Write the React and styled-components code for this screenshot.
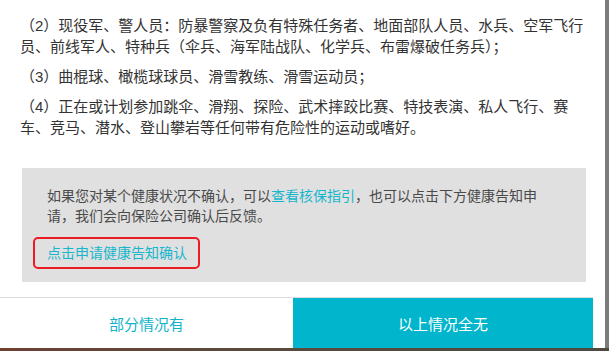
import styled, { createGlobalStyle } from "styled-components";

const GlobalStyle = createGlobalStyle`
html, body {
  margin: 0;
  padding: 0;
  height: 100%;
}
body {
  font-family: "Liberation Sans", "Noto Sans CJK SC", sans-serif;
  background: linear-gradient(90deg, #6e4032 0%, #5a4a3c 40%, #4e4a42 100%);
}
#root {
  height: 100%;
}
`;

const Screen = styled.div`
height: 100vh;
display: flex;
flex-direction: column;
`;

const TopRow = styled.div`
height: 348px;
display: flex;
`;

const Backdrop = styled.div`
flex: 1;
background-color: #7b7b7b;
`;

const Modal = styled.div`
width: 605px;
display: flex;
background-color: #fff;
`;

const Column = styled.div`
width: 593px;
display: flex;
flex-direction: column;
`;

const ScrollTrack = styled.div`
flex: 1;
background-color: #fff;
`;

const ScrollArea = styled.div`
flex: 1;
overflow: hidden;
padding-top: 15px;
`;

const Terms = styled.div`
padding: 0 8px 0 20px;
`;

const Paragraph = styled.p`
margin: 0 0 9px;
font-size: 15px;
line-height: 21px;
color: #333;
`;

const Notice = styled.div`
margin: 30px 7px 0 22px;
padding: 18px 40px 13px 25px;
background-color: #e0e0e0;
display: flex;
flex-direction: column;
align-items: flex-start;
`;

const NoticeText = styled.p`
margin: 0;
font-size: 14px;
line-height: 20px;
color: #4a4a4a;
`;

const Link = styled.span`
color: ${(props) => props.color || "#17b6cd"};
`;

const ApplyLink = styled.a`
margin: 11px 0 0 -14px;
padding: 0 11px 0 12px;
height: 28px;
line-height: 28px;
border: 2px solid #ec1c24;
border-radius: 5px;
font-size: 14px;
color: #17b6cd;
text-decoration: none;
`;

const Footer = styled.div`
height: 50px;
border-top: 1px solid #dcdcdc;
display: flex;
`;

const Btn = styled.button`
width: ${(props) => props.width}px;
border: 0;
margin: 0;
padding: 0;
font-family: "Liberation Sans", "Noto Sans CJK SC", sans-serif;
font-size: 15px;
background-color: ${(props) => (props.primary ? "#00b5cc" : "#fff")};
color: ${(props) => (props.primary ? "#fff" : "#10b3ca")};
`;

function App() {
  return (
    <>
      <GlobalStyle />
      <Screen>
        <TopRow>
          <Modal>
            <Column>
              <ScrollArea>
                <Terms>
                  <Paragraph>
                    （2）现役军、警人员：防暴警察及负有特殊任务者、地面部队人员、水兵、空军飞行
                    <br />
                    员、前线军人、特种兵（伞兵、海军陆战队、化学兵、布雷爆破任务兵）；
                  </Paragraph>
                  <Paragraph>（3）曲棍球、橄榄球球员、滑雪教练、滑雪运动员；</Paragraph>
                  <Paragraph>
                    （4）正在或计划参加跳伞、滑翔、探险、武术摔跤比赛、特技表演、私人飞行、赛
                    <br />
                    车、竞马、潜水、登山攀岩等任何带有危险性的运动或嗜好。
                  </Paragraph>
                </Terms>
                <Notice>
                  <NoticeText>
                    如果您对某个健康状况不确认，可以<Link>查看核保指引</Link>，也可以点击下方健康告知申
                    <br />
                    请，我们会向保险公司确认后反馈。
                  </NoticeText>
                  <ApplyLink href="#">点击申请健康告知确认</ApplyLink>
                </Notice>
              </ScrollArea>
              <Footer>
                <Btn width={293}>部分情况有</Btn>
                <Btn width={300} primary>
                  以上情况全无
                </Btn>
              </Footer>
            </Column>
            <ScrollTrack />
          </Modal>
          <Backdrop />
        </TopRow>
      </Screen>
    </>
  );
}

export default App;
